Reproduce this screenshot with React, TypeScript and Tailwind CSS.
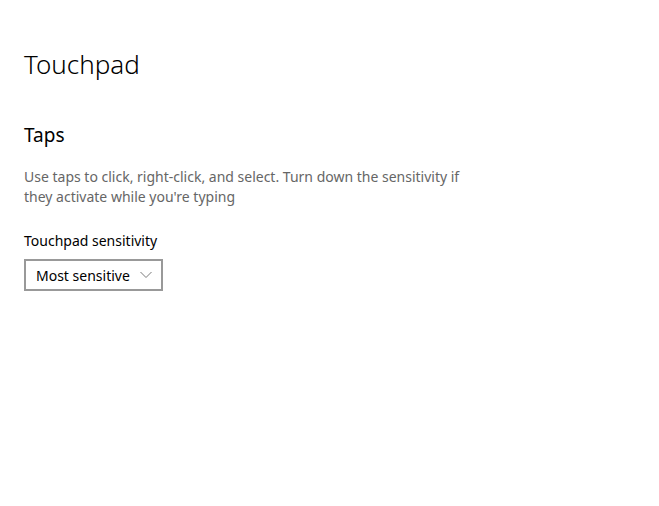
export default function App() {
    return (
        <div className="min-h-screen w-full bg-white px-6 pt-[40px] text-black" style={{ fontFamily: '"Noto Sans", "Open Sans", sans-serif' }}>
            <h1 className="text-[26px] font-light leading-[48px]">Touchpad</h1>
            <h2 className="mt-[33px] text-[19px] leading-[28px]">Taps</h2>
            <p className="mt-[18px] max-w-[460px] text-[14px] leading-[20px] text-[#666666]">
                Use taps to click, right-click, and select. Turn down the sensitivity if they activate while you're typing
            </p>
            <div className="mt-[24px] text-[14px] leading-[20px]">Touchpad sensitivity</div>
            <button className="mt-[8px] flex h-[32px] w-[139px] items-center justify-between border-2 border-[#999999] pl-[10px] pr-[9px] text-[14px]">
                <span>Most sensitive</span>
                <svg width="12" height="8" viewBox="0 0 12 8" fill="none" stroke="#7a7a7a" strokeWidth="1">
                    <path d="M0.5 1 L6 6.5 L11.5 1" />
                </svg>
            </button>
        </div>
    );
}
